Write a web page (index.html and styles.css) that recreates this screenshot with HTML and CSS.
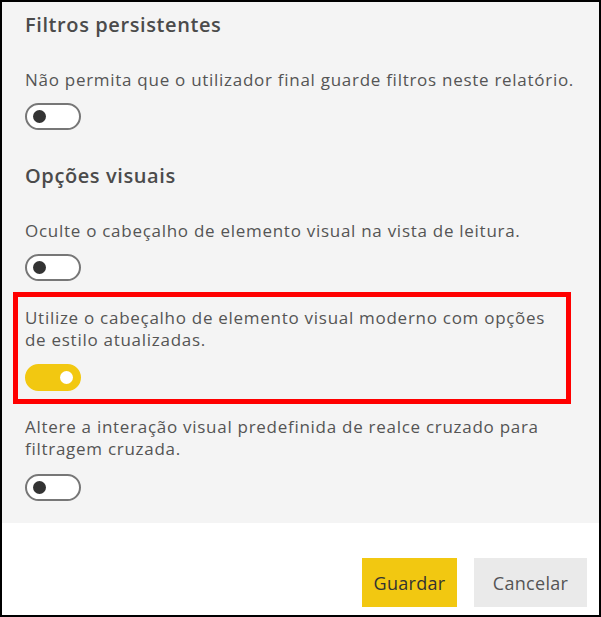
FILE: index.html
```html
<!DOCTYPE html>
<html lang="pt">
<head>
<meta charset="utf-8">
<link rel="stylesheet" href="styles.css">
</head>
<body>
<div class="frame">
  <div class="panel">
    <h2 class="heading">Filtros persistentes</h2>
    <p class="desc desc-first">Não permita que o utilizador final guarde filtros neste relatório.</p>
    <span class="toggle"><span class="knob"></span></span>

    <h2 class="heading heading-second">Opções visuais</h2>
    <p class="desc desc-first">Oculte o cabeçalho de elemento visual na vista de leitura.</p>
    <span class="toggle"><span class="knob"></span></span>

    <div class="highlight">
      <p class="desc">Utilize o cabeçalho de elemento visual moderno com opções de estilo atualizadas.</p>
      <span class="toggle toggle-on"><span class="knob"></span></span>
    </div>

    <p class="desc desc-after">Altere a interação visual predefinida de realce cruzado para filtragem cruzada.</p>
    <span class="toggle toggle-last"><span class="knob"></span></span>
  </div>
  <div class="footer">
    <button class="btn btn-primary">Guardar</button>
    <button class="btn btn-secondary">Cancelar</button>
  </div>
</div>
</body>
</html>
```
FILE: styles.css
```css
* { box-sizing: border-box; }
html, body { margin: 0; padding: 0; background: #fff; }
body { font-family: "Open Sans", "Noto Sans", sans-serif; }

.frame {
  width: 601px;
  height: 617px;
  border: 2px solid #000;
  display: flex;
  flex-direction: column;
}

.panel {
  background: #f4f4f4;
  height: 521px;
  padding: 10px 24px 0 23px;
  display: flex;
  flex-direction: column;
  align-items: flex-start;
}

.heading {
  margin: 0;
  font-size: 20px;
  line-height: 26px;
  font-weight: 600;
  letter-spacing: 0.6px;
  color: #4b4b4b;
}
.heading-second { margin-top: 33px; }

.desc {
  margin: 0;
  font-size: 17px;
  line-height: 22px;
  letter-spacing: 0.72px;
  color: #555;
}
.desc-first { margin-top: 31px; }
.desc-after { margin-top: 12px; }

.toggle {
  display: flex;
  align-items: center;
  width: 56px;
  height: 27px;
  margin-top: 12px;
  border: 2px solid #777;
  border-radius: 14px;
  background: #fff;
  padding-left: 6px;
}
.toggle-last { margin-top: 14px; }
.knob {
  width: 13px;
  height: 13px;
  border-radius: 50%;
  background: #333;
}
.toggle-on {
  background: #f2c811;
  border-color: #f2c811;
  justify-content: flex-end;
  padding-left: 0;
  padding-right: 6px;
}
.toggle-on .knob { background: #fff; }

.highlight {
  margin: 11px 0 0 -12px;
  width: 558px;
  border: 5px solid #ff0000;
  padding: 10px 7px 8px 7px;
  display: flex;
  flex-direction: column;
  align-items: flex-start;
}
.highlight .toggle { margin-top: 13px; }

.footer {
  flex: 1;
  display: flex;
  justify-content: flex-end;
  align-items: flex-start;
  gap: 17px;
  padding: 35px 12px 0 0;
}

.btn {
  height: 49px;
  border: none;
  font-family: "Open Sans", "Noto Sans", sans-serif;
  font-size: 18px;
  letter-spacing: 0.3px;
  padding: 0;
}
.btn-primary { width: 95px; background: #f2c811; color: #333; }
.btn-secondary { width: 113px; background: #eaeaea; color: #555; }
```
